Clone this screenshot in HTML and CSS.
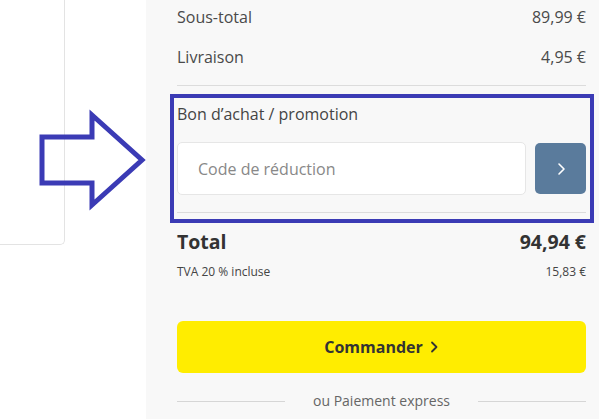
FILE: index.html
```html
<!DOCTYPE html>
<html lang="fr">
<head>
<meta charset="utf-8">
<link rel="stylesheet" href="styles.css">
</head>
<body>
<div class="page">
  <div class="left">
    <div class="card"></div>
  </div>
  <div class="summary">
    <div class="row"><span>Sous-total</span><span>89,99 €</span></div>
    <div class="row row-2"><span>Livraison</span><span>4,95 €</span></div>
    <hr class="divider first">
    <div class="promo">
      <div class="promo-label">Bon d’achat / promotion</div>
      <div class="promo-form">
        <input class="promo-input" type="text" placeholder="Code de réduction">
        <button class="promo-btn" type="button" aria-label="Appliquer">
          <svg width="10" height="14" viewBox="0 0 10 14"><polyline points="3,2 8,7 3,12" fill="none" stroke="#fff" stroke-width="1.6" stroke-linecap="round" stroke-linejoin="round"/></svg>
        </button>
      </div>
    </div>
    <hr class="divider second">
    <div class="total"><span>Total</span><span>94,94 €</span></div>
    <div class="tva"><span>TVA 20 % incluse</span><span>15,83 €</span></div>
    <button class="order" type="button">Commander
      <svg width="10" height="14" viewBox="0 0 10 14"><polyline points="3,2.5 7.5,7 3,11.5" fill="none" stroke="#333" stroke-width="1.8" stroke-linecap="round" stroke-linejoin="round"/></svg>
    </button>
    <div class="express"><span class="line"></span><span class="express-text">ou Paiement express</span><span class="line"></span></div>
  </div>
  <svg class="arrow" width="150" height="220" viewBox="0 0 150 220">
    <polygon points="42,137 92,137 92,115 142,160 92,205 92,183 42,183" fill="none" stroke="#3b3bb5" stroke-width="5" stroke-linejoin="miter"/>
  </svg>
  <div class="highlight"></div>
</div>
</body>
</html>
```
FILE: styles.css
```css
* { box-sizing: border-box; }
html, body { margin: 0; padding: 0; }
body {
  font-family: "Open Sans", "Noto Sans", sans-serif;
  color: #444;
  background: #fff;
  width: 599px;
  height: 419px;
  overflow: hidden;
}
.page {
  position: relative;
  display: flex;
  height: 419px;
}
.left {
  width: 146px;
  flex: none;
  background: #fff;
}
.card {
  width: 65px;
  height: 245px;
  border-right: 1px solid #e3e3e3;
  border-bottom: 1px solid #e3e3e3;
  border-bottom-right-radius: 5px;
}
.summary {
  flex: 1;
  background: #f8f8f8;
  padding: 5px 13px 0 31px;
  display: flex;
  flex-direction: column;
}
.row {
  display: flex;
  justify-content: space-between;
  font-size: 16px;
  line-height: 24px;
  color: #4a4a4a;
}
.row-2 { margin-top: 16px; }
.divider {
  border: 0;
  border-top: 1px solid #dcdcdc;
  margin: 0;
  height: 0;
}
.divider.first { margin-top: 16px; }
.promo { padding-top: 16px; }
.promo-label {
  font-size: 16px;
  line-height: 24px;
  color: #444;
}
.promo-form {
  display: flex;
  gap: 9px;
  margin-top: 16px;
}
.promo-input {
  flex: 1;
  height: 53px;
  border: 1px solid #e6e6e6;
  border-radius: 5px;
  background: #fff;
  padding: 0 20px;
  font-family: "Open Sans", "Noto Sans", sans-serif;
  font-size: 16px;
  color: #444;
  outline: none;
}
.promo-input::placeholder { color: #888; }
.promo-btn {
  width: 51px;
  height: 51px;
  margin-top: 1px;
  border: 0;
  border-radius: 5px;
  background: #5a7b9c;
  display: flex;
  align-items: center;
  justify-content: center;
  padding: 0;
}
.divider.second { margin-top: 17px; }
.total {
  display: flex;
  justify-content: space-between;
  margin-top: 15px;
  font-size: 19.5px;
  line-height: 28px;
  font-weight: 700;
  color: #333;
}
.tva {
  display: flex;
  justify-content: space-between;
  margin-top: 7px;
  font-size: 12px;
  line-height: 18px;
  color: #444;
}
.order {
  margin-top: 40px;
  height: 52px;
  border: 0;
  border-radius: 6px;
  background: #ffed00;
  font-family: "Open Sans", "Noto Sans", sans-serif;
  font-size: 16px;
  font-weight: 700;
  color: #333;
  display: flex;
  align-items: center;
  justify-content: center;
  gap: 6px;
  padding: 0;
}
.express {
  display: flex;
  align-items: center;
  margin-top: 18px;
  font-size: 14px;
  line-height: 20px;
  color: #666;
}
.express .line {
  flex: 1;
  border-top: 1px solid #d6d6d6;
  height: 0;
}
.express-text { padding: 0 28px; }
.arrow {
  position: absolute;
  left: 0;
  top: 0;
}
.highlight {
  position: absolute;
  left: 170px;
  top: 94px;
  width: 424px;
  height: 129px;
  border: 4px solid #3b3bb5;
}
```
